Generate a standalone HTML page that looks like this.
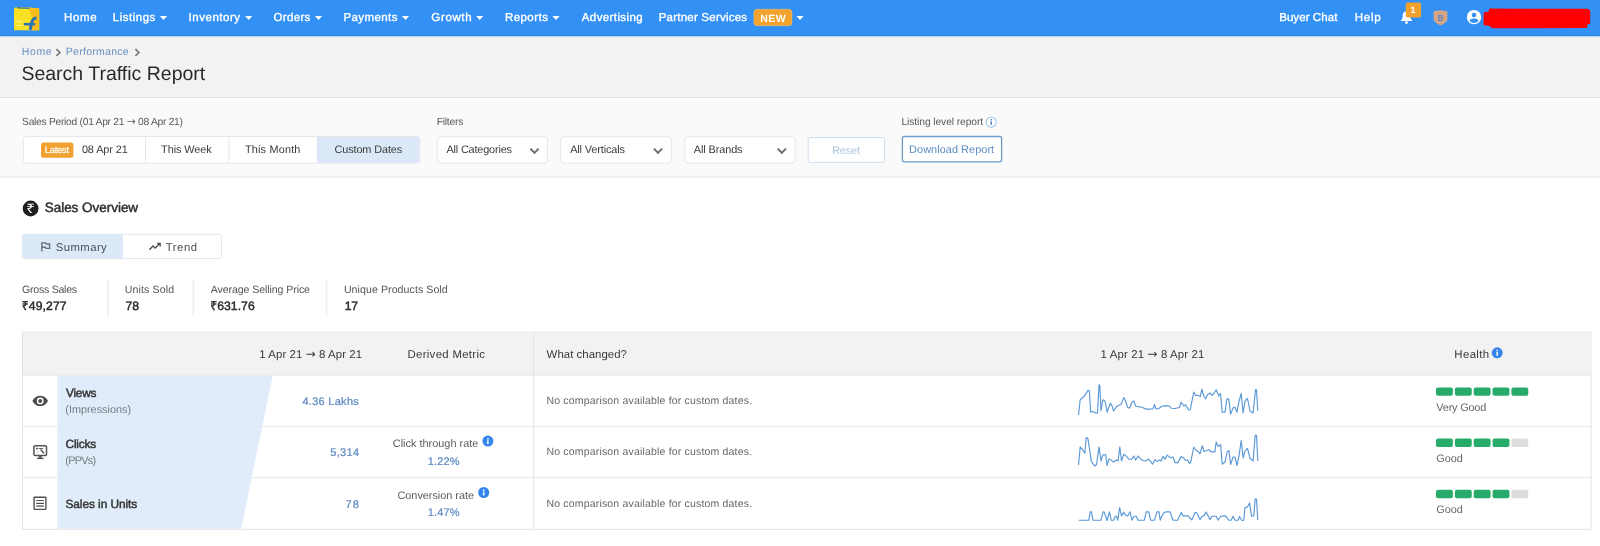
<!DOCTYPE html>
<html lang="en">
<head>
<meta charset="utf-8">
<title>Search Traffic Report</title>
<style>
*{box-sizing:border-box;margin:0;padding:0}
html,body{width:1600px;height:546px;overflow:hidden;background:#fff}
body{font-family:"Liberation Sans",sans-serif;color:#333;position:relative;font-size:11px}
#page{position:absolute;left:0;top:0;width:1600px;height:546px;overflow:hidden;will-change:transform}
#art{position:absolute;left:0;top:0;display:block}
.t{position:absolute;white-space:nowrap;line-height:1;text-rendering:geometricPrecision}
.ar{font-family:"DejaVu Sans",sans-serif;font-size:1.05em;line-height:0}
</style>
</head>
<body>
<div id="page">
<svg id="art" width="1600" height="546" viewBox="0 0 1600 546">
<rect x="0.00" y="0.00" width="1600.00" height="36.45" rx="0" fill="#3391f5"/>
<rect x="0.00" y="35.40" width="1600.00" height="1.05" rx="0" fill="#3684dd"/>
<rect x="0.00" y="36.45" width="1600.00" height="60.55" rx="0" fill="#f2f2f2"/>
<rect x="0.00" y="97.00" width="1600.00" height="1.00" rx="0" fill="#e3e3e3"/>
<rect x="0.00" y="98.00" width="1600.00" height="78.20" rx="0" fill="#fafafa"/>
<rect x="0.00" y="176.20" width="1600.00" height="1.60" rx="0" fill="#eeeeee"/>
<g>
  <path d="M14 9.4 Q14 8.6 15 7.8 L16.4 6.9 L38.6 8.3 L39.2 9.6 L39.2 30.2 L14 30.2 Z" fill="#f8e022"/>
  <path d="M27 7.6 L38.6 8.3 L39.2 9.6 L39.2 30.2 L31 30.2 C33 24 33 14 27 7.6 Z" fill="#f9bd1c"/>
  <path d="M16.4 6.9 L29 7.7 L29.4 8.9 L17.6 8.4 Z" fill="#3f7d8c"/>
  <path d="M14.6 20.4 h7 l2 1.8 h-9 Z M14.6 25 h10 v1 h-10 Z" fill="#fbee6a"/>
  <path d="M23.8 24.2 H35.2" stroke="#2c73b4" stroke-width="2.5" fill="none"/>
  <path d="M30.2 29.8 C31.6 24 31 18.6 36.4 17.8" stroke="#2c73b4" stroke-width="3" fill="none"/>
</g>
<path d="M159.9 16.1 h7.2 l-3.6 3.9 Z" fill="#fff"/>
<path d="M245.1 16.1 h7.2 l-3.6 3.9 Z" fill="#fff"/>
<path d="M314.9 16.1 h7.2 l-3.6 3.9 Z" fill="#fff"/>
<path d="M401.9 16.1 h7.2 l-3.6 3.9 Z" fill="#fff"/>
<path d="M476.1 16.1 h7.2 l-3.6 3.9 Z" fill="#fff"/>
<path d="M552.4 16.1 h7.2 l-3.6 3.9 Z" fill="#fff"/>
<path d="M796.4 16.1 h7.2 l-3.6 3.9 Z" fill="#fff"/>
<rect x="754.00" y="9.40" width="37.80" height="16.20" rx="3" fill="#f3a22c" stroke="#f7b955" stroke-width="0.8"/>
<path d="M1406.5 11.2 C1403.6 11.2 1402.7 13.6 1402.7 16 C1402.7 18.6 1401.8 19.8 1400.4 21 L1412.6 21 C1411.2 19.8 1410.3 18.6 1410.3 16 C1410.3 13.6 1409.4 11.2 1406.5 11.2 Z" fill="#fff"/><circle cx="1406.5" cy="22.6" r="1.4" fill="#fff"/>
<rect x="1405.80" y="2.50" width="15.30" height="15.00" rx="2" fill="#f3a22c"/>
<path d="M1433.6 11.2 L1440.5 10.2 L1447.4 11.2 L1447.4 18.5 C1447.4 22 1443.5 24.2 1440.5 25.4 C1437.5 24.2 1433.6 22 1433.6 18.5 Z" fill="#d6a583"/>
<text x="1440.5" y="21.4" text-anchor="middle" font-family="Liberation Sans, sans-serif" font-weight="700" font-size="9.5" fill="#5a7fd0" textLength="5.6" lengthAdjust="spacingAndGlyphs">B</text>
<circle cx="1474" cy="17.1" r="7.2" fill="#fff"/><circle cx="1474" cy="15" r="2.3" fill="#3391f5"/><path d="M1469.4 20.8 C1470.1 19 1472.1 18.4 1474 18.4 C1475.9 18.4 1477.9 19 1478.6 20.8 C1477.5 22.2 1475.9 22.9 1474 22.9 C1472.1 22.9 1470.5 22.2 1469.4 20.8 Z" fill="#3391f5"/>
<path d="M1489.5 8.6 L1588 8.8 L1590.2 10.5 L1590.2 23.6 L1587.4 24.4 L1587 28 L1492.5 28.2 L1488.2 25.6 L1483.6 25.2 L1483.6 12.4 L1488.6 11.6 Z" fill="#fe0000"/>
<path d="M56.4 49.2 L59.9 52.5 L56.4 55.8" fill="none" stroke="#7a7a7a" stroke-width="1.7"/>
<path d="M135.4 49.2 L138.9 52.5 L135.4 55.8" fill="none" stroke="#7a7a7a" stroke-width="1.7"/>
<rect x="23.40" y="136.60" width="396.40" height="26.60" rx="3" fill="#fff" stroke="#e6e6e6" stroke-width="1"/>
<path d="M317 137.1 H416.8 Q419.3 137.1 419.3 139.6 V160.2 Q419.3 162.7 416.8 162.7 H317 Z" fill="#dbe8f7"/>
<path d="M145.6 137.1 V162.7" stroke="#e6e6e6" stroke-width="1" fill="none"/>
<path d="M228.9 137.1 V162.7" stroke="#e6e6e6" stroke-width="1" fill="none"/>
<rect x="41.00" y="142.60" width="32.40" height="15.20" rx="2.5" fill="#f1a130"/>
<rect x="437.30" y="136.80" width="110.20" height="26.20" rx="3" fill="#fff" stroke="#e6e6e6" stroke-width="1"/>
<rect x="560.70" y="136.80" width="110.60" height="26.20" rx="3" fill="#fff" stroke="#e6e6e6" stroke-width="1"/>
<rect x="684.80" y="136.80" width="110.30" height="26.20" rx="3" fill="#fff" stroke="#e6e6e6" stroke-width="1"/>
<path d="M530.4 148.6 L534.5 152.9 L538.6 148.6" fill="none" stroke="#6a6a6a" stroke-width="1.9"/>
<path d="M653.9 148.6 L658.0 152.9 L662.1 148.6" fill="none" stroke="#6a6a6a" stroke-width="1.9"/>
<path d="M777.7 148.6 L781.8000000000001 152.9 L785.9000000000001 148.6" fill="none" stroke="#6a6a6a" stroke-width="1.9"/>
<rect x="808.20" y="137.60" width="76.40" height="24.80" rx="1" fill="#fff" stroke="#cfdeee" stroke-width="1"/>
<rect x="902.40" y="136.50" width="99.20" height="25.30" rx="2" fill="#fff" stroke="#6d9bcc" stroke-width="1.3"/>
<circle cx="991.2" cy="122.2" r="5" fill="#fff" stroke="#9ec3e6" stroke-width="1.1"/><rect x="990.5" y="121.2" width="1.5" height="3.8" fill="#5b8cc3"/><rect x="990.5" y="119" width="1.5" height="1.4" fill="#5b8cc3"/>
<circle cx="30.6" cy="208.5" r="7.9" fill="#1f1f1f"/>
<rect x="22.60" y="234.30" width="199.00" height="24.30" rx="2" fill="#fff" stroke="#e3e6ea" stroke-width="1"/>
<path d="M24.6 234.3 H122.9 V258.6 H24.6 Q22.6 258.6 22.6 256.6 V236.3 Q22.6 234.3 24.6 234.3 Z" fill="#dce9f8"/>
<path d="M41.8 242.2 V251.6 M41.8 242.9 H45.6 L46.2 244 H49.6 V248.4 H46 L45.4 247.3 H41.8" fill="none" stroke="#6a7279" stroke-width="1.4"/>
<path d="M149.4 249.8 L153 246 L155.2 248.2 L159.6 243.8 M157.2 243.4 H160.2 V246.4" fill="none" stroke="#4a4a4a" stroke-width="1.25"/>
<path d="M107.9 280.4 V315.4" stroke="#ededed" stroke-width="1.6" fill="none"/>
<path d="M193.4 280.4 V315.4" stroke="#ededed" stroke-width="1.6" fill="none"/>
<path d="M326.5 280.4 V315.4" stroke="#ededed" stroke-width="1.6" fill="none"/>
<rect x="22.50" y="332.10" width="1568.60" height="197.20" rx="0" fill="#fff" stroke="#e4e4e4" stroke-width="1"/>
<rect x="23.00" y="332.60" width="1567.60" height="42.20" rx="0" fill="#f2f2f2"/>
<path d="M23 375.2 H1590.6" stroke="rgba(0,0,0,0.09)" stroke-width="1" fill="none"/>
<path d="M23 426.6 H1590.6" stroke="rgba(0,0,0,0.09)" stroke-width="1" fill="none"/>
<path d="M23 477.6 H1590.6" stroke="rgba(0,0,0,0.09)" stroke-width="1" fill="none"/>
<path d="M57.4 375.7 H272.7 L241.2 528.8 H57.4 Z" fill="#ddeafa" fill-opacity="0.9"/>
<path d="M533.7 332.6 V528.8" stroke="#e2e2e2" stroke-width="1" fill="none"/>
<path d="M32.4 400.9 C34.3 397.2 37.1 395.7 40.2 395.7 C43.3 395.7 46.1 397.2 48 400.9 C46.1 404.6 43.3 406.1 40.2 406.1 C37.1 406.1 34.3 404.6 32.4 400.9 Z" fill="#4d4d4d"/><circle cx="40.2" cy="400.9" r="3.4" fill="#fff"/><circle cx="40.2" cy="400.9" r="2" fill="#4d4d4d"/>
<rect x="33.9" y="445.8" width="12.6" height="9.6" rx="1.2" fill="#fff" stroke="#555" stroke-width="1.5"/><path d="M37 458.4 H43.6" stroke="#555" stroke-width="1.3" fill="none"/><path d="M38.4 458.4 L39 456 H41.4 L42 458.4 Z" fill="#555"/><rect x="36" y="447.8" width="1.8" height="1.6" fill="#555"/><path d="M38.6 448.5 H43.2" stroke="#666" stroke-width="1" fill="none"/><path d="M40.6 449.4 L44 453.2" stroke="#555" stroke-width="1.5" fill="none"/><path d="M36.6 452 H39" stroke="#a9c4df" stroke-width="0.8" fill="none"/>
<rect x="34.1" y="497.2" width="11.8" height="12.2" rx="0.6" fill="#fff" stroke="#4f4f4f" stroke-width="1.4"/><path d="M36.2 500.5 H43.9 M36.2 503.3 H43.9 M36.2 506.1 H43.9" stroke="#4f4f4f" stroke-width="1.2" fill="none"/>
<circle cx="487.9" cy="441.1" r="5.5" fill="#3585ec"/><rect x="487.15" y="440.3" width="1.5" height="3.8" fill="#fff"/><rect x="487.15" y="438.1" width="1.5" height="1.5" fill="#fff"/>
<circle cx="483.7" cy="492.5" r="5.5" fill="#3585ec"/><rect x="482.95" y="491.7" width="1.5" height="3.8" fill="#fff"/><rect x="482.95" y="489.5" width="1.5" height="1.5" fill="#fff"/>
<circle cx="1497.2" cy="352.8" r="5.5" fill="#3585ec"/><rect x="1496.45" y="352.0" width="1.5" height="3.8" fill="#fff"/><rect x="1496.45" y="349.8" width="1.5" height="1.5" fill="#fff"/>
<g fill="none" stroke="#5a98d6" stroke-width="1.15" stroke-linejoin="round"><polyline points="1078.5,415.0 1080.2,399.8 1084.4,396.0 1088.1,390.4 1089.4,390.8 1090.6,412.0 1093.1,411.6 1095.6,413.1 1097.5,412.9 1099.0,384.8 1099.8,385.4 1101.0,411.0 1102.8,399.8 1105.0,401.0 1107.1,412.2 1110.2,403.5 1111.9,405.4 1113.5,411.0 1116.5,406.6 1118.8,405.4 1121.2,404.1 1123.8,397.5 1125.6,401.0 1127.5,407.2 1129.4,408.2 1131.9,402.2 1133.8,401.0 1135.6,406.0 1138.1,406.6 1141.9,407.2 1146.2,409.1 1150.0,409.1 1153.1,408.8 1154.4,404.5 1156.2,409.1 1158.8,408.5 1161.9,406.2 1166.2,405.6 1169.4,406.0 1171.2,408.2 1175.0,408.5 1179.4,407.5 1181.2,402.2 1183.8,406.0 1185.6,404.8 1188.8,410.0 1190.2,409.8 1193.8,392.0 1195.6,395.4 1198.1,395.4 1200.2,396.6 1201.9,389.1 1203.8,396.0 1205.6,398.8 1207.5,394.8 1210.0,392.9 1211.9,395.4 1213.8,393.5 1216.2,389.8 1218.8,396.0 1220.6,393.5 1222.2,412.2 1225.0,412.2 1226.9,398.8 1228.8,398.8 1230.6,414.1 1233.1,407.9 1235.0,407.2 1236.9,412.2 1238.8,402.2 1241.2,393.5 1243.1,412.9 1245.0,401.0 1247.5,398.5 1250.0,411.0 1253.1,412.9 1255.6,389.5 1256.5,390.0 1257.8,410.8"/><polyline points="1078.5,465.1 1080.2,447.0 1082.5,449.5 1084.8,453.2 1086.2,437.6 1087.8,438.2 1090.0,452.0 1091.2,460.8 1093.1,463.9 1095.0,466.0 1096.5,464.5 1099.0,447.0 1101.0,460.8 1102.8,455.1 1105.6,454.5 1107.1,465.5 1109.0,458.9 1111.2,460.1 1113.5,462.0 1116.5,460.1 1118.1,460.8 1119.8,446.8 1121.5,460.8 1123.8,454.2 1126.0,455.8 1128.8,459.2 1131.5,459.2 1133.8,456.0 1135.6,460.1 1138.1,456.0 1140.0,458.2 1142.5,460.5 1145.6,461.0 1148.5,459.2 1150.6,461.4 1152.5,464.2 1154.8,459.8 1156.9,461.4 1159.4,460.1 1161.0,461.0 1163.1,456.4 1165.0,459.2 1167.2,455.1 1170.0,457.6 1173.1,457.0 1175.0,462.6 1177.8,462.6 1181.2,456.4 1183.8,458.2 1185.6,460.5 1187.5,459.8 1189.4,463.5 1190.6,462.6 1193.8,447.0 1195.6,449.8 1198.1,451.4 1200.0,453.9 1202.2,445.8 1204.0,451.4 1206.2,450.8 1208.8,449.8 1211.2,451.8 1214.8,451.8 1216.2,442.0 1218.1,446.4 1220.6,444.5 1222.2,464.2 1225.0,462.0 1227.2,452.0 1229.0,450.5 1230.6,464.5 1233.1,457.0 1235.0,457.0 1236.9,465.5 1239.0,455.8 1241.2,440.5 1243.1,458.0 1245.0,450.8 1247.5,448.5 1250.0,458.2 1253.1,461.0 1255.2,435.1 1256.5,435.5 1257.8,461.0"/><polyline points="1078.8,520.2 1088.8,520.2 1090.2,511.8 1091.5,511.8 1092.8,520.2 1101.0,520.2 1103.1,511.8 1104.0,511.8 1107.1,520.5 1109.4,511.8 1111.2,520.2 1113.5,520.2 1115.2,516.5 1116.5,516.2 1117.8,520.2 1119.6,507.5 1121.5,515.9 1123.8,512.1 1125.6,515.2 1127.8,515.9 1130.0,511.8 1131.9,520.2 1134.0,516.2 1136.2,516.2 1138.1,520.2 1144.4,520.2 1146.2,511.8 1148.8,511.8 1150.6,520.2 1154.4,520.2 1156.9,511.8 1159.0,511.8 1160.2,520.2 1163.1,513.4 1165.6,511.8 1170.0,511.8 1173.1,520.2 1177.5,520.2 1181.2,512.5 1183.1,515.9 1188.1,515.9 1191.9,520.0 1195.0,512.5 1196.5,512.5 1200.0,519.6 1201.9,516.5 1203.8,515.9 1206.2,512.1 1210.0,519.6 1211.9,516.2 1216.2,516.2 1218.1,520.2 1220.6,516.2 1225.6,515.9 1228.8,520.2 1231.2,520.2 1233.1,516.2 1235.0,520.2 1238.1,520.2 1239.4,516.5 1241.9,520.5 1243.8,520.2 1245.0,507.5 1247.5,507.1 1249.6,503.0 1251.5,516.2 1253.8,515.9 1255.2,498.8 1256.5,499.0 1257.8,520.0"/></g>
<rect x="1436.00" y="387.40" width="16.90" height="8.40" rx="2" fill="#27ab6b"/>
<rect x="1454.85" y="387.40" width="16.90" height="8.40" rx="2" fill="#27ab6b"/>
<rect x="1473.70" y="387.40" width="16.90" height="8.40" rx="2" fill="#27ab6b"/>
<rect x="1492.55" y="387.40" width="16.90" height="8.40" rx="2" fill="#27ab6b"/>
<rect x="1511.40" y="387.40" width="16.90" height="8.40" rx="2" fill="#27ab6b"/>
<rect x="1436.00" y="438.60" width="16.90" height="8.40" rx="2" fill="#27ab6b"/>
<rect x="1454.85" y="438.60" width="16.90" height="8.40" rx="2" fill="#27ab6b"/>
<rect x="1473.70" y="438.60" width="16.90" height="8.40" rx="2" fill="#27ab6b"/>
<rect x="1492.55" y="438.60" width="16.90" height="8.40" rx="2" fill="#27ab6b"/>
<rect x="1511.40" y="438.60" width="16.90" height="8.40" rx="2" fill="#dddddd"/>
<rect x="1436.00" y="489.80" width="16.90" height="8.40" rx="2" fill="#27ab6b"/>
<rect x="1454.85" y="489.80" width="16.90" height="8.40" rx="2" fill="#27ab6b"/>
<rect x="1473.70" y="489.80" width="16.90" height="8.40" rx="2" fill="#27ab6b"/>
<rect x="1492.55" y="489.80" width="16.90" height="8.40" rx="2" fill="#27ab6b"/>
<rect x="1511.40" y="489.80" width="16.90" height="8.40" rx="2" fill="#dddddd"/>
</svg>
<span class="t" style="left:26.5px;top:202px;font-size:13px;color:#fff;transform:scaleX(1.25)">₹</span>
<span class="t" style="left:64.08px;top:12.5px;font-size:11.5px;color:#ffffff;letter-spacing:0.67px;-webkit-text-stroke:0.35px #ffffff">Home</span>
<span class="t" style="left:112.81px;top:12.5px;font-size:11.5px;color:#ffffff;letter-spacing:0.51px;-webkit-text-stroke:0.35px #ffffff">Listings</span>
<span class="t" style="left:188.62px;top:12.5px;font-size:11.5px;color:#ffffff;letter-spacing:0.52px;-webkit-text-stroke:0.35px #ffffff">Inventory</span>
<span class="t" style="left:273.6px;top:12.5px;font-size:11.5px;color:#ffffff;letter-spacing:0.31px;-webkit-text-stroke:0.35px #ffffff">Orders</span>
<span class="t" style="left:343.4px;top:12.5px;font-size:11.5px;color:#ffffff;letter-spacing:0.41px;-webkit-text-stroke:0.35px #ffffff">Payments</span>
<span class="t" style="left:431.34px;top:12.5px;font-size:11.5px;color:#ffffff;letter-spacing:0.64px;-webkit-text-stroke:0.35px #ffffff">Growth</span>
<span class="t" style="left:504.93px;top:12.5px;font-size:11.5px;color:#ffffff;letter-spacing:0.45px;-webkit-text-stroke:0.35px #ffffff">Reports</span>
<span class="t" style="left:581.79px;top:12.5px;font-size:11.5px;color:#ffffff;letter-spacing:0.4px;-webkit-text-stroke:0.35px #ffffff">Advertising</span>
<span class="t" style="left:658.71px;top:12.5px;font-size:11.5px;color:#ffffff;letter-spacing:0.22px;-webkit-text-stroke:0.35px #ffffff">Partner Services</span>
<span class="t" style="left:1279.15px;top:12.5px;font-size:11.5px;color:#ffffff;letter-spacing:0.08px;-webkit-text-stroke:0.35px #ffffff">Buyer Chat</span>
<span class="t" style="left:1354.76px;top:12.5px;font-size:11.5px;color:#ffffff;letter-spacing:0.75px;-webkit-text-stroke:0.35px #ffffff">Help</span>
<span class="t" style="left:760.37px;top:13.5px;font-size:10.5px;color:#ffffff;letter-spacing:0.39px;font-weight:700">NEW</span>
<span class="t" style="left:1410.4px;top:5.5px;font-size:9px;color:#ffffff;font-weight:700">1</span>
<span class="t" style="left:21.72px;top:46.5px;font-size:10.5px;color:#6a91c3;letter-spacing:0.62px">Home</span>
<span class="t" style="left:65.8px;top:46.5px;font-size:10.5px;color:#6a91c3;letter-spacing:0.27px">Performance</span>
<span class="t" style="left:21.4px;top:64.5px;font-size:19.5px;color:#2a2a2a">Search Traffic Report</span>
<span class="t" style="left:22.09px;top:117.5px;font-size:10.3px;color:#5a5a5a;letter-spacing:-0.29px">Sales Period (01 Apr 21 <span class="ar">→</span> 08 Apr 21)</span>
<span class="t" style="left:436.63px;top:117.5px;font-size:10.3px;color:#5a5a5a;letter-spacing:-0.21px">Filters</span>
<span class="t" style="left:901.48px;top:117.5px;font-size:10.3px;color:#5a5a5a;letter-spacing:-0.1px">Listing level report</span>
<span class="t" style="left:44.84px;top:144.5px;font-size:9.4px;color:#ffffff;letter-spacing:-0.26px;-webkit-text-stroke:0.2px #ffffff">Latest</span>
<span class="t" style="left:81.88px;top:144.5px;font-size:10.9px;color:#3a3a3a;letter-spacing:-0.08px">08 Apr 21</span>
<span class="t" style="left:161.12px;top:144.5px;font-size:10.9px;color:#3a3a3a;letter-spacing:-0.07px">This Week</span>
<span class="t" style="left:244.92px;top:144.5px;font-size:10.9px;color:#3a3a3a;letter-spacing:0.18px">This Month</span>
<span class="t" style="left:334.53px;top:144.5px;font-size:10.9px;color:#3a3a3a;letter-spacing:-0.12px">Custom Dates</span>
<span class="t" style="left:446.52px;top:144.5px;font-size:10.9px;color:#3a3a3a;letter-spacing:-0.18px">All Categories</span>
<span class="t" style="left:570.16px;top:144.5px;font-size:10.9px;color:#3a3a3a;letter-spacing:-0.12px">All Verticals</span>
<span class="t" style="left:693.82px;top:144.5px;font-size:10.9px;color:#3a3a3a;letter-spacing:-0.1px">All Brands</span>
<span class="t" style="left:832.2px;top:145.5px;font-size:10.9px;color:#a9c4df;letter-spacing:-0.18px">Reset</span>
<span class="t" style="left:909.12px;top:144.5px;font-size:10.9px;color:#5b8cc3;letter-spacing:0.06px">Download Report</span>
<span class="t" style="left:44.73px;top:200.5px;font-size:13.5px;color:#2e2e2e;letter-spacing:-0.03px;-webkit-text-stroke:0.45px #2e2e2e">Sales Overview</span>
<span class="t" style="left:55.86px;top:242.5px;font-size:11.3px;color:#47505a;letter-spacing:0.42px">Summary</span>
<span class="t" style="left:165.72px;top:242.5px;font-size:11.3px;color:#444a50;letter-spacing:0.55px">Trend</span>
<span class="t" style="left:21.97px;top:284.5px;font-size:10.6px;color:#555;letter-spacing:-0.25px">Gross Sales</span>
<span class="t" style="left:124.68px;top:284.5px;font-size:10.6px;color:#555;letter-spacing:0.12px">Units Sold</span>
<span class="t" style="left:210.72px;top:284.5px;font-size:10.6px;color:#555;letter-spacing:-0.09px">Average Selling Price</span>
<span class="t" style="left:343.9px;top:284.5px;font-size:10.6px;color:#555;letter-spacing:0.07px">Unique Products Sold</span>
<span class="t" style="left:21.82px;top:299.5px;font-size:12.2px;color:#2b2b2b;letter-spacing:0.08px;-webkit-text-stroke:0.45px #2b2b2b">₹49,277</span>
<span class="t" style="left:125.5px;top:299.5px;font-size:12.2px;color:#2b2b2b;-webkit-text-stroke:0.45px #2b2b2b">78</span>
<span class="t" style="left:210.15px;top:299.5px;font-size:12.2px;color:#2b2b2b;letter-spacing:0.05px;-webkit-text-stroke:0.45px #2b2b2b">₹631.76</span>
<span class="t" style="left:344.86px;top:299.5px;font-size:12.2px;color:#2b2b2b;letter-spacing:-0.32px;-webkit-text-stroke:0.45px #2b2b2b">17</span>
<span class="t" style="left:259.31px;top:349.5px;font-size:11.4px;color:#383838;letter-spacing:0.09px">1 Apr 21 <span class="ar">→</span> 8 Apr 21</span>
<span class="t" style="left:407.5px;top:349.5px;font-size:11.4px;color:#383838;letter-spacing:0.31px">Derived Metric</span>
<span class="t" style="left:546.62px;top:349.5px;font-size:11.4px;color:#383838;letter-spacing:0.04px">What changed?</span>
<span class="t" style="left:1100.58px;top:349.5px;font-size:11.4px;color:#383838;letter-spacing:0.14px">1 Apr 21 <span class="ar">→</span> 8 Apr 21</span>
<span class="t" style="left:1454.27px;top:349.5px;font-size:11.4px;color:#383838;letter-spacing:0.4px">Health</span>
<span class="t" style="left:66.0px;top:387.5px;font-size:11.9px;color:#333;letter-spacing:-0.26px;-webkit-text-stroke:0.45px #333">Views</span>
<span class="t" style="left:65.3px;top:404.5px;font-size:10.9px;color:#777c82;letter-spacing:-0.02px">(Impressions)</span>
<span class="t" style="left:65.51px;top:438.5px;font-size:11.9px;color:#333;letter-spacing:-0.18px;-webkit-text-stroke:0.45px #333">Clicks</span>
<span class="t" style="left:65.29px;top:455.5px;font-size:10.9px;color:#777c82;letter-spacing:-0.72px">(PPVs)</span>
<span class="t" style="left:65.48px;top:498.5px;font-size:11.9px;color:#333;letter-spacing:-0.07px;-webkit-text-stroke:0.45px #333">Sales in Units</span>
<span class="t" style="left:302.4px;top:396.5px;font-size:11px;color:#5f8ac2;letter-spacing:0.29px;-webkit-text-stroke:0.22px #5f8ac2">4.36 Lakhs</span>
<span class="t" style="left:330.31px;top:447.5px;font-size:11px;color:#5f8ac2;letter-spacing:0.3px;-webkit-text-stroke:0.22px #5f8ac2">5,314</span>
<span class="t" style="left:345.53px;top:499.5px;font-size:11px;color:#5f8ac2;letter-spacing:1.12px;-webkit-text-stroke:0.22px #5f8ac2">78</span>
<span class="t" style="left:392.78px;top:438.5px;font-size:10.9px;color:#5c5c5c;letter-spacing:0.01px">Click through rate</span>
<span class="t" style="left:427.7px;top:456.5px;font-size:11px;color:#5f8ac2;letter-spacing:0.15px;-webkit-text-stroke:0.22px #5f8ac2">1.22%</span>
<span class="t" style="left:397.51px;top:490.5px;font-size:10.9px;color:#5c5c5c;letter-spacing:-0.03px">Conversion rate</span>
<span class="t" style="left:427.7px;top:507.5px;font-size:11px;color:#5f8ac2;letter-spacing:0.15px;-webkit-text-stroke:0.22px #5f8ac2">1.47%</span>
<span class="t" style="left:546.44px;top:395.5px;font-size:10.5px;color:#666;letter-spacing:0.18px">No comparison available for custom dates.</span>
<span class="t" style="left:546.44px;top:446.5px;font-size:10.5px;color:#666;letter-spacing:0.18px">No comparison available for custom dates.</span>
<span class="t" style="left:546.44px;top:498.5px;font-size:10.5px;color:#666;letter-spacing:0.18px">No comparison available for custom dates.</span>
<span class="t" style="left:1436.3px;top:402.5px;font-size:10.9px;color:#666;letter-spacing:-0.19px">Very Good</span>
<span class="t" style="left:1436.23px;top:453.5px;font-size:10.9px;color:#666;letter-spacing:-0.05px">Good</span>
<span class="t" style="left:1436.23px;top:504.5px;font-size:10.9px;color:#666;letter-spacing:-0.05px">Good</span>
</div>
</body>
</html>
